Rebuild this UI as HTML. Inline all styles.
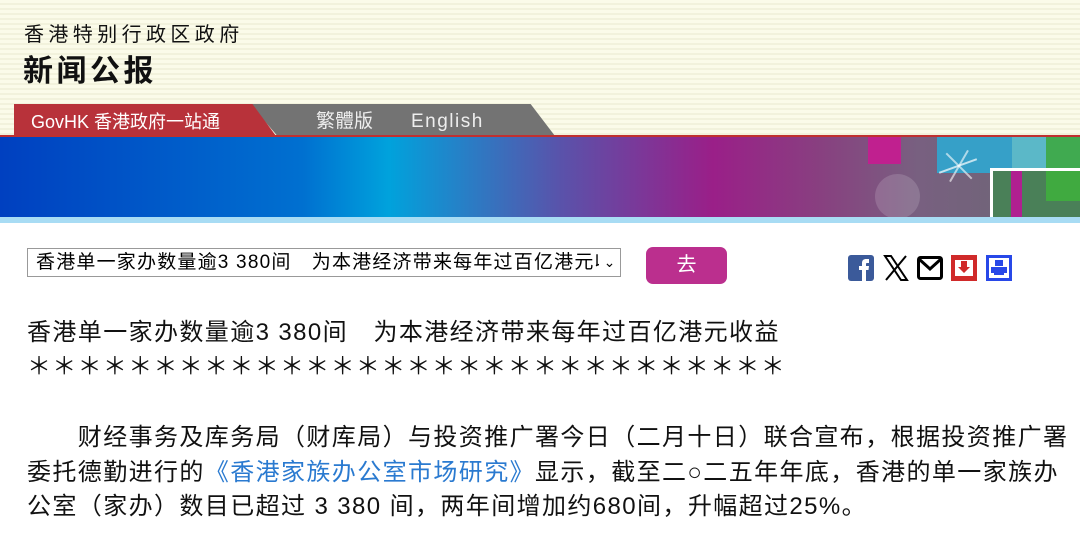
<!DOCTYPE html>
<html><head><meta charset="utf-8"><style>
body{margin:0;width:1080px;height:553px;overflow:hidden;background:#fff;font-family:"Liberation Sans","Noto Sans CJK SC",sans-serif;}
.top{position:absolute;left:0;top:0;width:1080px;height:136px;background:repeating-linear-gradient(#fbfbe9 0 3px,#f2f2dc 3px 5px);}
.t1{position:absolute;left:24px;top:18px;font-size:20px;letter-spacing:4.4px;color:#111;}
.t2{position:absolute;left:23px;top:46px;font-size:30px;font-weight:bold;letter-spacing:3.5px;color:#111;}
.red{position:absolute;left:14px;top:104px;width:262px;height:32px;background:#b8323a;clip-path:polygon(0 0,91% 0,100% 100%,0 100%);}
.redt{position:absolute;left:31px;top:104px;color:#fff;font-size:18px;line-height:36px;white-space:nowrap;}
.gray{position:absolute;left:250px;top:104px;width:305px;height:32px;background:#737373;clip-path:polygon(0 0,92% 0,100% 100%,9% 100%);}
.gt{position:absolute;top:104px;color:#eee;font-size:19px;line-height:36px;}
.line{position:absolute;left:0;top:135px;width:1080px;height:2px;background:#c03030;}
.ban{position:absolute;left:0;top:137px;width:1080px;height:80px;background:linear-gradient(90deg,#0040c0 0%,#0070d0 28%,#00a2dc 36%,#5a52aa 52%,#9a1f88 66%,#884080 76%,#786080 85%,#6a6872 100%);overflow:hidden;}
.strip{position:absolute;left:0;top:217px;width:1080px;height:6px;background:#a8dcf4;}
.sel{position:absolute;left:27px;top:248px;width:594px;height:29px;border:1px solid #999;box-sizing:border-box;font-size:19px;line-height:27px;padding-left:8px;color:#000;white-space:nowrap;overflow:hidden;letter-spacing:1.2px;}
.btn{position:absolute;left:646px;top:247px;width:81px;height:37px;background:#bb2f8e;border-radius:7px;color:#fff;font-size:20px;text-align:center;line-height:37px;}
.txt{position:absolute;left:27px;font-size:24px;color:#111;white-space:nowrap;letter-spacing:1.4px;}
.ic{position:absolute;top:255px;width:26px;height:26px;}
</style></head><body>
<div class="top"></div>
<div class="t1">香港特别行政区政府</div>
<div class="t2">新闻公报</div>
<div class="gray"></div>
<div class="red"></div>
<div class="redt">GovHK 香港政府一站通</div>
<div class="gt" style="left:316px">繁體版</div>
<div class="gt" style="left:411px;letter-spacing:1.5px">English</div>
<div class="line"></div>
<div class="ban">
 <div style="position:absolute;left:868px;top:0;width:33px;height:27px;background:#c0208f"></div>
 <div style="position:absolute;left:875px;top:37px;width:45px;height:45px;border-radius:50%;background:rgba(255,255,255,.15)"></div>
 <div style="position:absolute;left:937px;top:0;width:75px;height:36px;background:#36a0c8"></div>
 <div style="position:absolute;left:1012px;top:0;width:34px;height:36px;background:#5bb8c8"></div>
 <div style="position:absolute;left:1046px;top:0;width:34px;height:36px;background:#40aa50"></div>
 <div style="position:absolute;left:990px;top:31px;width:90px;height:60px;background:#4a8058;border:3px solid #fff;border-right:none;border-bottom:none"></div>
 <div style="position:absolute;left:1011px;top:34px;width:11px;height:50px;background:#b02090"></div>
 <div style="position:absolute;left:1046px;top:34px;width:34px;height:30px;background:#40aa40"></div>
 <div style="position:absolute;left:938px;top:28px;width:40px;height:2px;background:rgba(255,255,255,.7);transform:rotate(-20deg)"></div>
 <div style="position:absolute;left:941px;top:28px;width:36px;height:2px;background:rgba(255,255,255,.6);transform:rotate(45deg)"></div>
 <div style="position:absolute;left:941px;top:28px;width:36px;height:2px;background:rgba(255,255,255,.6);transform:rotate(-60deg)"></div>
</div>
<div class="strip"></div>
<div class="sel">香港单一家办数量逾3 380间　为本港经济带来每年过百亿港元收益</div>
<div style="position:absolute;left:599px;top:249px;width:21px;height:27px;background:#fff;font-size:14px;line-height:27px;text-align:center">&#8964;</div>
<div class="btn">去</div>
<svg class="ic" style="left:848px" viewBox="0 0 26 26"><rect width="26" height="26" rx="3" fill="#3b5a9a"/><path d="M14 26V15h-3v-4h3V8c0-3 2-4 4-4h3v4h-2c-1 0-1 .5-1 1v2h3l-.5 4H18v11z" fill="#fff"/></svg>
<svg class="ic" style="left:883px" viewBox="0 0 26 26"><path d="M2 1h6l16 24h-6z" fill="none" stroke="#000" stroke-width="2"/><path d="M23 1L3 25" stroke="#000" stroke-width="2"/></svg>
<svg class="ic" style="left:917px" viewBox="0 0 26 26"><rect x="1.5" y="2.5" width="23" height="21" rx="2" fill="#fff" stroke="#000" stroke-width="3"/><path d="M2 4l11 10 11-10" fill="none" stroke="#000" stroke-width="3"/></svg>
<svg class="ic" style="left:951px" viewBox="0 0 26 26"><rect width="26" height="26" fill="#d02a2a"/><rect x="4" y="5" width="18" height="16" fill="#fff"/><path d="M10 6h6v6h3l-6 6-6-6h3z" fill="#d02a2a"/></svg>
<svg class="ic" style="left:986px" viewBox="0 0 26 26"><rect width="26" height="26" fill="#2848e8"/><rect x="3" y="3" width="20" height="20" fill="#fff"/><rect x="9" y="5" width="8" height="6" fill="#2848e8"/><rect x="5" y="12" width="16" height="6" fill="#2848e8"/><rect x="8" y="18" width="10" height="2" fill="#2848e8"/></svg>
<div class="txt" style="top:312px">香港单一家办数量逾3 380间　为本港经济带来每年过百亿港元收益</div>
<div class="txt" style="top:346px;letter-spacing:1.3px">＊＊＊＊＊＊＊＊＊＊＊＊＊＊＊＊＊＊＊＊＊＊＊＊＊＊＊＊＊＊</div>
<div class="txt" style="top:417px">　　财经事务及库务局（财库局）与投资推广署今日（二月十日）联合宣布，根据投资推广署</div>
<div class="txt" style="top:452px">委托德勤进行的<span style="color:#2a7ad0">《香港家族办公室市场研究》</span>显示，截至二○二五年年底，香港的单一家族办</div>
<div class="txt" style="top:486px">公室（家办）数目已超过 3 380 间，两年间增加约680间，升幅超过25%。</div>
</body></html>
